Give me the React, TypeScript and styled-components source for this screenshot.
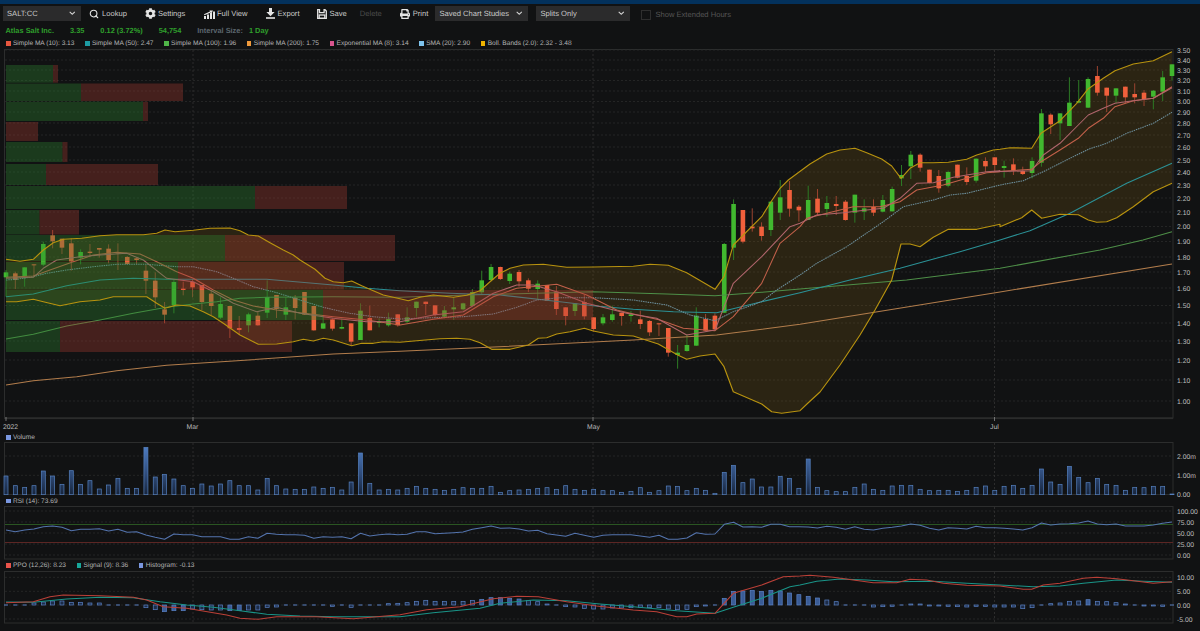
import React from 'react';
import styled, { createGlobalStyle } from 'styled-components';
import { FaChevronDown, FaCog, FaPrint } from 'react-icons/fa';
import { Search } from 'lucide-react';

const GlobalStyle = createGlobalStyle`
  html, body {
    margin: 0;
    height: 100%;
    background: #111213;
    overflow: hidden;
    text-rendering: geometricPrecision;
  }
`;

const Page = styled.div`
  width: 1200px;
  height: 631px;
  display: flex;
  flex-direction: column;
  background: #111213;
  font-family: 'Liberation Sans', Arial, sans-serif;
  color: #c4c4c4;
  overflow: hidden;
`;

const TitleBar = styled.div`
  height: 4px;
  flex: none;
  background: #03315c;
  overflow: hidden;
  padding-left: 14px;
`;

const TitleText = styled.div`
  margin-top: -6px;
  font-size: 8px;
  line-height: 8px;
  font-weight: bold;
  letter-spacing: 0.9px;
  color: #dfe6ee;
`;

const Toolbar = styled.div`
  height: 19px;
  flex: none;
  display: flex;
  align-items: center;
  padding-left: 3px;
  font-size: 7.6px;
`;

const Select = styled.div<{ $w: number; $ml?: number }>`
  width: ${({ $w }) => $w}px;
  height: 15.5px;
  margin-left: ${({ $ml = 0 }) => $ml}px;
  box-sizing: border-box;
  padding: 0 6px 0 4px;
  display: flex;
  align-items: center;
  justify-content: space-between;
  background: #2b2b2c;
  color: #c8c8c8;
  font-size: 7.6px;

  svg {
    width: 6.5px;
    height: 6.5px;
    color: #d8d8d8;
  }
`;

const ToolButton = styled.div<{ $ml: number; $gap?: number; $dim?: boolean }>`
  margin-left: ${({ $ml }) => $ml}px;
  display: flex;
  align-items: center;
  gap: ${({ $gap = 3 }) => $gap}px;
  color: ${({ $dim }) => ($dim ? '#4c4c4c' : '#c8c8c8')};

  svg {
    color: #e4e4e4;
    flex: none;
  }
`;

const CheckBox = styled.div`
  width: 10px;
  height: 10px;
  margin-left: 11px;
  margin-top: 2px;
  border: 1px solid #2e2e2e;
  box-sizing: border-box;
`;

const CheckLabel = styled.span`
  margin-left: 4px;
  margin-top: 1px;
  color: #555;
`;

const InfoRow = styled.div`
  height: 11px;
  flex: none;
  margin-top: 2px;
  display: flex;
  align-items: center;
  padding-left: 5.5px;
  font-size: 7.4px;
  font-weight: bold;
  color: #2f9f2c;
`;

const InfoItem = styled.span<{ $ml?: number; $muted?: boolean }>`
  margin-left: ${({ $ml = 0 }) => $ml}px;
  color: ${({ $muted }) => ($muted ? '#5c666e' : '#2f9f2c')};
`;

const Legend = styled.div<{ $h: number; $top?: number }>`
  height: ${({ $h }) => $h}px;
  flex: none;
  display: flex;
  align-items: center;
  gap: 10.6px;
  padding-left: 6px;
  padding-top: ${({ $top = 0 }) => $top}px;
  box-sizing: border-box;
  font-size: 6.6px;
  color: #b4b4b4;
`;

const LegendItem = styled.span`
  display: flex;
  align-items: center;
  gap: 2.4px;
  white-space: nowrap;
`;

const Swatch = styled.i<{ $c: string }>`
  width: 4.5px;
  height: 4.5px;
  background: ${({ $c }) => $c};
`;

const PaneSvg = styled.svg`
  display: block;
  flex: none;
  width: 1200px;
  overflow: visible;

  text {
    font-family: 'Liberation Sans', Arial, sans-serif;
    font-size: 6.8px;
    fill: #bcbcbc;
  }
`;

const GRID = '#2a2b2b';
const FRAME = '#2c2d2d';

// turns points read off a 3x crop back into page pixels
type P = [number, number];
const crop = (x0: number, y0: number, list: P[]): P[] => list.map(([x, y]) => [x0 + x / 3, y0 + y / 3]);
const poly = (list: P[]) => list.map(([x, y]) => `${x.toFixed(1)},${y.toFixed(1)}`).join(' ');
const cx = (i: number) => 6 + i * 9.328;

type C = [number, number, number, number, 'g' | 'r'];

const candlesA: C[] = [
  [157, 172, 150, 230, 'g'], [160, 180, 155, 207, 'r'], [142, 168, 142, 200, 'g'], [133, 135, 133, 168, 'r'],
  [72, 134, 65, 138, 'g'], [46, 64, 30, 85, 'r'], [56, 83, 56, 102, 'r'], [70, 124, 55, 152, 'r'],
  [96, 113, 88, 133, 'g'], [95, 99, 72, 107, 'r'], [84, 89, 84, 113, 'r'], [86, 120, 73, 130, 'r'],
  [97, 99, 70, 150, 'r'], [111, 132, 108, 133, 'r'], [115, 120, 113, 133, 'r'], [152, 182, 135, 222, 'r'],
  [182, 232, 157, 264, 'r'], [268, 284, 246, 310, 'r'], [186, 256, 178, 280, 'g'], [206, 210, 185, 226, 'r'],
  [186, 202, 178, 232, 'r'], [195, 246, 195, 270, 'r'], [221, 258, 210, 285, 'r'], [252, 293, 232, 297, 'g'],
  [258, 325, 258, 354, 'r'], [324, 330, 288, 345, 'r'], [283, 316, 278, 337, 'g'], [287, 316, 275, 317, 'r'],
  [231, 278, 181, 294, 'g'], [225, 267, 225, 294, 'r'], [262, 284, 232, 300, 'g'], [233, 264, 225, 298, 'r'],
  [216, 284, 216, 285, 'r'], [258, 331, 258, 332, 'r'], [310, 326, 285, 327, 'g'], [298, 326, 295, 332, 'r'],
  [321, 326, 295, 328, 'g'], [310, 365, 310, 378, 'r'], [272, 360, 250, 360, 'g'], [294, 331, 257, 331, 'r'],
  [304, 309, 295, 322, 'g'], [297, 316, 278, 320, 'g'], [283, 316, 283, 320, 'r'],
  [292, 305, 262, 310, 'g'], [245, 264, 245, 290, 'g'], [245, 252, 245, 285, 'r'], [256, 285, 256, 290, 'r'],
  [271, 290, 258, 295, 'g'], [262, 268, 232, 300, 'g'], [250, 268, 248, 272, 'g'], [216, 258, 207, 260, 'g'],
  [181, 217, 152, 222, 'g'], [141, 180, 132, 184, 'g'], [141, 177, 140, 180, 'r'], [161, 183, 155, 192, 'g'],
  [156, 184, 150, 200, 'r'], [181, 206, 175, 216, 'r'], [191, 207, 181, 240, 'g'], [195, 243, 195, 243, 'r'],
  [215, 267, 198, 285, 'r'], [262, 288, 262, 316, 'r'], [250, 273, 250, 288, 'g'], [246, 289, 225, 298, 'r'],
  [292, 327, 292, 335, 'r'], [292, 310, 282, 316, 'g'], [283, 300, 257, 305, 'g'], [278, 288, 278, 317, 'r'],
  [283, 288, 273, 305, 'g'], [298, 312, 272, 327, 'r'], [303, 337, 300, 348, 'r'], [310, 312, 310, 348, 'r'],
  [324, 398, 324, 410, 'r'], [398, 405, 375, 446, 'g'], [375, 393, 342, 395, 'g'], [287, 377, 262, 378, 'g'],
  [297, 332, 282, 334, 'r'], [287, 328, 280, 332, 'r'], [72, 278, 72, 278, 'g'],
];

const candlesB: C[] = [
  [312, 443, 298, 480, 'g'], [330, 425, 330, 430, 'r'], [380, 385, 325, 395, 'r'], [380, 408, 367, 422, 'r'],
  [305, 390, 305, 408, 'g'], [292, 338, 240, 360, 'g'], [270, 326, 243, 350, 'r'], [320, 331, 315, 365, 'r'],
  [300, 360, 257, 360, 'g'], [296, 338, 267, 345, 'r'], [309, 327, 288, 350, 'g'], [312, 318, 288, 345, 'r'],
  [305, 360, 300, 362, 'r'], [284, 338, 284, 368, 'g'], [325, 335, 298, 360, 'g'], [321, 338, 298, 348, 'r'],
  [300, 335, 285, 337, 'g'], [267, 334, 260, 335, 'g'], [225, 235, 195, 258, 'g'], [164, 199, 153, 237, 'g'],
  [164, 203, 160, 215, 'r'], [209, 249, 209, 250, 'r'], [228, 265, 210, 278, 'r'], [216, 257, 212, 262, 'g'],
  [194, 233, 194, 235, 'r'], [228, 246, 202, 255, 'r'], [176, 242, 175, 248, 'g'], [183, 199, 172, 216, 'r'],
];

const candlesC: C[] = [
  [352, 375, 352, 395, 'r'], [378, 384, 362, 413, 'g'], [373, 392, 355, 405, 'r'], [393, 402, 380, 405, 'r'],
  [363, 399, 352, 415, 'g'], [220, 368, 207, 380, 'g'], [224, 253, 220, 282, 'r'], [220, 250, 220, 300, 'g'],
  [188, 258, 112, 258, 'g'], [183, 188, 120, 190, 'g'], [117, 203, 112, 204, 'g'], [108, 158, 78, 167, 'r'],
  [143, 167, 143, 216, 'r'], [145, 167, 145, 190, 'g'], [140, 172, 140, 190, 'r'], [162, 172, 130, 190, 'r'],
  [158, 177, 150, 198, 'r'], [152, 170, 150, 208, 'g'], [112, 155, 93, 183, 'g'], [73, 108, 73, 122, 'g'],
];

const toPage = (list: C[], y0: number): C[] =>
  list.map(([a, b, c, d, k]) => [y0 + a / 3, y0 + b / 3, y0 + c / 3, y0 + d / 3, k]);

const candles: C[] = [...toPage(candlesA, 220), ...toPage(candlesB, 100), ...toPage(candlesC, 40)];
// the tall candle of the May breakout was cut in the first crop
candles[77] = [244, 312.7, 243, 313, 'g'];

const priceLabels: [string, number][] = [
  ['3.50', 50], ['3.40', 60], ['3.30', 70], ['3.20', 80.5], ['3.10', 91], ['3.00', 101.5], ['2.90', 112], ['2.80', 123],
  ['2.70', 135], ['2.60', 147], ['2.50', 160], ['2.40', 172], ['2.30', 185], ['2.20', 198], ['2.10', 212], ['2.00', 226.5],
  ['1.90', 241.5], ['1.80', 257], ['1.70', 272], ['1.60', 288], ['1.50', 305.5], ['1.40', 323], ['1.30', 341], ['1.20', 360],
  ['1.10', 380], ['1.00', 401],
];

// volume profile rows: top, bottom, end of green, end of red
const profile: [number, number, number, number][] = [
  [65, 82.7, 53, 58], [83.5, 101, 81, 183], [101.7, 121, 143, 148], [122, 141, 6, 38], [142, 162, 62.5, 67.5],
  [164, 185, 46, 158], [186, 209, 255, 347], [210, 234.5, 39.5, 79], [235, 261, 225, 395], [262, 289.5, 178, 344],
  [290, 320, 323, 593], [321, 352, 60, 292],
];

const upper: P[] = [
  ...crop(0, 220, [[18, 118], [60, 124], [100, 118], [130, 90], [160, 68], [190, 58], [245, 55], [300, 47], [350, 44], [430, 44], [470, 40], [495, 30], [525, 35], [580, 31], [630, 25], [690, 24], [720, 32], [745, 45], [775, 48], [810, 68], [850, 90], [880, 105], [900, 120], [945, 148], [975, 175], [1000, 185], [1030, 188], [1055, 183], [1085, 197], [1120, 212], [1150, 225]]),
  ...crop(400, 220, [[0, 236], [25, 242], [60, 232], [100, 225], [160, 232], [200, 226], [240, 212], [270, 185], [300, 160], [330, 145], [370, 135], [430, 133], [500, 142], [580, 141], [700, 139], [750, 133], [805, 136], [860, 158], [945, 208]]),
  ...crop(700, 100, [[72, 530], [100, 435], [130, 405], [185, 350], [213, 305], [240, 265], [265, 240], [330, 192], [380, 162], [420, 150], [465, 145], [500, 158], [545, 177], [575, 198], [603, 235], [630, 205], [660, 188], [700, 188], [745, 187], [800, 178], [830, 165], [880, 150], [900, 148]]),
  ...crop(960, 40, [[150, 323], [215, 325], [243, 280], [300, 242], [350, 190], [383, 148], [430, 115], [465, 92], [520, 72], [580, 62], [636, 35]]),
];

const lower: P[] = [
  ...crop(0, 220, [[18, 245], [50, 245], [100, 238], [130, 245], [180, 257], [240, 245], [300, 240], [340, 230], [440, 230], [470, 250], [495, 265], [530, 255], [570, 258], [610, 275], [640, 290], [670, 310], [720, 345], [775, 373], [830, 372], [880, 365], [910, 358], [940, 363], [970, 355], [1000, 360], [1055, 377], [1085, 370], [1120, 370], [1150, 365]]),
  ...crop(400, 220, [[0, 367], [50, 362], [120, 356], [170, 355], [210, 358], [240, 368], [275, 388], [330, 388], [385, 375], [415, 355], [440, 353], [470, 342], [510, 335], [553, 325], [580, 333], [640, 345], [700, 348], [775, 372], [833, 405], [860, 418], [900, 408], [945, 402], [972, 440], [1000, 515], [1085, 552], [1115, 575], [1145, 580], [1200, 572]]),
  [808, 403], [820, 392], [840, 365], [860, 335], [875, 310],
  ...crop(700, 100, [[575, 540], [603, 432], [630, 432], [660, 440], [700, 412], [745, 388], [830, 388], [900, 373]]),
  ...crop(960, 40, [[120, 560], [185, 533], [215, 510], [245, 535], [300, 523], [355, 524], [385, 540], [410, 547], [440, 545], [470, 533], [520, 500], [580, 455], [636, 430]]),
];

const sma20: P[] = [
  ...crop(0, 220, [[18, 180], [50, 178], [100, 170], [140, 160], [200, 150], [280, 140], [350, 133], [440, 133], [530, 140], [580, 140], [650, 155], [700, 175], [760, 200], [830, 218], [900, 240], [970, 262], [1050, 280], [1120, 290]]),
  ...crop(400, 220, [[0, 297], [70, 294], [190, 290], [280, 282], [350, 262], [410, 240], [480, 233], [580, 233], [700, 240], [800, 255], [870, 285], [945, 302], [1000, 275], [1085, 245], [1130, 210], [1200, 165]]),
  ...crop(700, 100, [[350, 490], [440, 440], [550, 365], [610, 320], [700, 300], [750, 285], [800, 280], [900, 255]]),
  ...crop(960, 40, [[190, 422], [250, 395], [330, 355], [385, 328], [440, 310], [500, 280], [580, 250], [636, 217]]),
];

const sma50: P[] = [
  ...crop(0, 220, [[18, 230], [100, 222], [200, 197], [300, 180], [400, 175], [500, 178], [800, 178], [1000, 195], [1100, 205]]),
  ...crop(400, 220, [[0, 212], [150, 220], [300, 225], [480, 245], [580, 257], [700, 268], [820, 275], [950, 278], [1085, 245], [1200, 218]]),
  ...crop(700, 100, [[450, 540], [600, 505], [780, 455], [900, 420]]),
  ...crop(960, 40, [[210, 572], [330, 520], [500, 430], [636, 370]]),
];

const sma100: P[] = [
  ...crop(0, 220, [[18, 357], [100, 343], [200, 318], [300, 300], [400, 280], [500, 262], [580, 252], [650, 245], [720, 235], [800, 232], [1000, 230]]),
  ...crop(400, 220, [[0, 232], [200, 225], [580, 215], [800, 222], [945, 227], [1085, 217], [1200, 207]]),
  ...crop(700, 100, [[620, 540], [900, 505]]),
  [1100, 250], [1143, 240], [1172, 231.7],
];

const sma200: P[] = [
  ...crop(0, 220, [[18, 495], [100, 482], [230, 470], [350, 452], [500, 436], [700, 423], [1000, 402]]),
  ...crop(400, 220, [[0, 394], [200, 385], [400, 375], [700, 360], [950, 345], [1200, 313]]),
  [1000, 292], [1172, 264],
];

const sma10: P[] = [
  ...crop(0, 220, [[18, 172], [100, 168], [150, 150], [220, 125], [280, 105], [350, 97], [420, 102], [470, 125], [530, 155], [580, 175], [640, 210], [700, 240], [760, 258], [830, 270], [900, 278], [1000, 290], [1100, 300]]),
  ...crop(400, 220, [[0, 315], [100, 298], [190, 285], [280, 230], [350, 205], [470, 193], [560, 225], [650, 270], [700, 282], [780, 300], [850, 325], [945, 332], [1000, 290], [1085, 190]]),
  ...crop(700, 100, [[240, 430], [300, 380], [320, 355], [380, 340], [460, 320], [540, 320], [600, 305], [650, 270], [730, 255], [800, 235], [860, 218], [900, 215]]),
  ...crop(960, 40, [[100, 395], [215, 388], [243, 365], [300, 330], [355, 295], [385, 265], [430, 235], [465, 200], [520, 182], [580, 175], [636, 140]]),
];

const ema8: P[] = [
  ...crop(0, 220, [[18, 175], [100, 172], [130, 145], [170, 120], [240, 110], [300, 105], [380, 100], [430, 120], [500, 175], [580, 185], [640, 215], [700, 250], [770, 275], [830, 262], [900, 280], [1000, 295], [1100, 305]]),
  ...crop(400, 220, [[0, 305], [100, 285], [190, 275], [280, 220], [350, 195], [400, 195], [470, 215], [560, 250], [680, 280], [770, 295], [860, 345], [945, 330], [1000, 190], [1085, 110], [1170, 20]]),
  ...crop(700, 100, [[300, 370], [350, 345], [430, 338], [500, 330], [550, 325], [600, 295], [650, 250], [700, 248], [760, 232], [860, 215], [900, 212]]),
  ...crop(960, 40, [[100, 395], [215, 392], [250, 345], [300, 310], [355, 255], [385, 225], [430, 205], [465, 190], [520, 182], [580, 175], [636, 143]]),
];

// tops of the volume bars in the 3x crop, base line is at 224
const volumes = [
  168, 197, 202, 197, 153, 168, 193, 152, 193, 182, 207, 195, 175, 205, 205, 82, 171, 163, 177, 197, 205, 192, 198, 192, 182, 197, 197, 210, 175, 197, 207, 208, 208, 201, 205, 202, 210, 186, 99, 190, 210, 208, 210,
  205, 199, 205, 208, 211, 208, 203, 205, 205, 199, 217, 212, 210, 208, 205, 203, 208, 197, 208, 211, 208, 212, 212, 217, 214, 203, 217, 212, 198, 199, 212, 205, 211, 220, 157, 136, 188, 177, 201, 201, 169, 175, 205,
  117, 202, 212, 215, 215, 202, 192, 208, 211, 198, 196, 196, 208, 212, 211, 211, 214, 211, 202, 198, 211, 199, 196, 205, 196, 147, 186, 193, 139, 172, 188, 175, 193, 196, 211, 202, 203, 199, 199, 222,
];

const rsi = [
  330, 335, 330, 327, 320, 318, 322, 332, 328, 328, 326, 333, 328, 337, 335, 345, 352, 358, 342, 344, 344, 350, 350, 350, 358, 358, 350, 355, 340, 343, 344, 344, 346, 355, 350, 352, 350, 356, 340, 348, 344, 342, 344,
  343, 335, 335, 341, 340, 338, 336, 328, 323, 318, 325, 324, 327, 333, 331, 341, 345, 349, 340, 346, 352, 346, 344, 344, 344, 348, 352, 346, 358, 358, 354, 338, 343, 342, 313, 307, 321, 320, 322, 313, 313, 320, 320,
  321, 324, 319, 322, 328, 320, 328, 330, 325, 322, 318, 312, 316, 325, 330, 323, 325, 327, 319, 323, 323, 325, 327, 330, 323, 309, 315, 312, 311, 309, 303, 312, 314, 312, 318, 318, 318, 315, 310, 306,
];

// histogram values in crop pixels, up from the zero line
const histogram = [
  -1, 0, 0, 6, 9, 12, 12, 8, 8, 6, 6, 2, 2, 0, 0, -8, -14, -20, -17, -17, -12, -14, -15, -15, -17, -17, -15, -15, -7, -6, -2, -1, 0, -2, -2, -4, -2, -7, -1, -1, 2, 4, 5,
  7, 11, 14, 11, 11, 11, 11, 14, 17, 22, 22, 20, 18, 14, 10, 3, 1, -5, -6, -10, -12, -12, -9, -9, -8, -7, -8, -8, -12, -14, -13, -5, -3, -1, 20, 41, 42, 44, 41, 44, 42, 36, 31,
  26, 21, 15, 10, 1, 1, 0, -6, -5, -4, -1, 3, 3, -3, -3, -4, -5, -6, -4, -4, -6, -6, -6, -11, -8, 1, 4, 6, 11, 12, 16, 11, 10, 7, 3, 0, -3, -3, -4, -1,
];

const ppo: P[] = [
  ...crop(0, 420, [[18, 548], [100, 545], [150, 530], [190, 525], [300, 527], [400, 532], [440, 540], [490, 560], [560, 565], [640, 578], [680, 585], [720, 595], [775, 598], [830, 590], [950, 590], [1060, 596]]),
  ...crop(400, 420, [[0, 584], [80, 569], [180, 560], [280, 536], [350, 529], [415, 530], [500, 545], [590, 558], [700, 570], [770, 575], [830, 590], [860, 590], [890, 582], [945, 580], [1000, 520], [1085, 495], [1150, 470]]),
  ...crop(800, 420, [[0, 468], [30, 466], [100, 472], [160, 480], [220, 488], [290, 488], [330, 478], [380, 480], [430, 490], [500, 496], [600, 498], [670, 508], [695, 508], [730, 495], [780, 490], [850, 475], [890, 472], [950, 476], [1000, 482], [1060, 490], [1116, 485]]),
];

const signal: P[] = [
  ...crop(0, 420, [[18, 546], [100, 547], [200, 537], [300, 532], [400, 533], [480, 545], [560, 555], [640, 562], [720, 572], [800, 583], [900, 588], [1000, 590]]),
  ...crop(400, 420, [[0, 590], [100, 578], [240, 565], [300, 550], [400, 540], [500, 542], [600, 552], [700, 560], [830, 572], [945, 580], [1000, 562], [1085, 535], [1170, 500]]),
  ...crop(800, 420, [[0, 495], [50, 484], [120, 477], [200, 480], [280, 485], [400, 484], [500, 490], [600, 495], [700, 500], [780, 498], [850, 490], [950, 480], [1030, 484], [1116, 487]]),
];

const HLine = ({ y, x2 = 1173 }: { y: number; x2?: number }) => (
  <line x1={5} x2={x2} y1={y} y2={y} stroke={GRID} strokeWidth={0.8} strokeDasharray="2 2" />
);

const MonthLines = ({ top, bottom }: { top: number; bottom: number }) => (
  <>
    {[193, 593, 994.5].map((x) => (
      <line key={x} x1={x} x2={x} y1={top} y2={bottom} stroke="#333434" strokeWidth={0.8} strokeDasharray="2 2" />
    ))}
  </>
);

const Line = ({ points, color, width = 1.05, dash }: { points: P[]; color: string; width?: number; dash?: string }) => (
  <polyline points={poly(points)} fill="none" stroke={color} strokeWidth={width} strokeDasharray={dash} strokeLinejoin="round" />
);

const PricePane = () => (
  <PaneSvg viewBox="0 48 1200 384" height={384}>
    <rect x={4.5} y={49.5} width={1168.5} height={368.5} fill="none" stroke={FRAME} />
    {priceLabels.map(([, y]) => (
      <HLine key={y} y={y} />
    ))}
    <MonthLines top={50} bottom={418} />
    <polygon points={poly([...upper, ...[...lower].reverse()])} fill="rgba(125,93,21,.25)" />
    {candles.map(([a, b, c, d, k], i) => (
      <g key={i}>
        <line x1={cx(i)} x2={cx(i)} y1={c} y2={d} stroke={k === 'g' ? '#2d7a25' : '#9c4430'} strokeWidth={1} />
        <rect x={cx(i) - 2.3} y={a} width={4.6} height={Math.max(b - a, 1)} fill={k === 'g' ? '#41b82f' : '#f1603c'} />
      </g>
    ))}
    <Line points={sma200} color="#b27d4c" />
    <Line points={sma100} color="#4e8f48" />
    <Line points={sma50} color="#2b9196" />
    <Line points={sma20} color="#6d8f9c" dash="1.5 0.8" />
    <Line points={sma10} color="#c2604a" />
    <Line points={ema8} color="#b0656c" />
    {profile.map(([top, bottom, green, red]) => (
      <g key={top}>
        <rect x={6} y={top} width={green - 6} height={bottom - top} fill="rgba(46,134,48,.35)" />
        <rect x={green} y={top} width={Math.max(red - green, 0)} height={bottom - top} fill="rgba(165,60,48,.35)" />
      </g>
    ))}
    <Line points={upper} color="#b8930f" width={1.15} />
    <Line points={lower} color="#b8930f" width={1.15} />
    <rect x={4} y={417.5} width={1169} height={1.6} fill="#2b2c2c" />
    {priceLabels.map(([label, y]) => (
      <text key={label} x={1177} y={y + 2.5}>
        {label}
      </text>
    ))}
    {[6, 193, 593, 994.5].map((x) => (
      <line key={x} x1={x} x2={x} y1={417} y2={421} stroke="#8a8a8a" strokeWidth={0.8} />
    ))}
    <text x={3} y={429}>2022</text>
    <text x={186.5} y={429}>Mar</text>
    <text x={587} y={429}>May</text>
    <text x={990} y={429}>Jul</text>
  </PaneSvg>
);

const VolumePane = () => (
  <PaneSvg viewBox="0 442 1200 54" height={54}>
    <defs>
      <linearGradient id="volFill" gradientUnits="userSpaceOnUse" x1="0" y1="445" x2="0" y2="495">
        <stop offset="0" stopColor="#4f7fc6" />
        <stop offset="0.6" stopColor="#2e4a78" />
        <stop offset="1" stopColor="#17243a" />
      </linearGradient>
    </defs>
    <rect x={4.5} y={442.5} width={1168.5} height={52} fill="none" stroke={FRAME} />
    <HLine y={456} />
    <HLine y={475.3} />
    <MonthLines top={443} bottom={494} />
    {volumes.map((v, i) => (
      <rect
        key={i}
        x={cx(i) - 2}
        y={420 + v / 3}
        width={4}
        height={(224 - v) / 3}
        fill="url(#volFill)"
        stroke="#5580bf"
        strokeWidth={0.7}
      />
    ))}
    <text x={1177} y={458.5}>2.00m</text>
    <text x={1177} y={477.8}>1.00m</text>
    <text x={1177} y={497}>0.00</text>
  </PaneSvg>
);

const RsiPane = () => (
  <PaneSvg viewBox="0 506 1200 54" height={54}>
    <rect x={4.5} y={506.5} width={1168.5} height={52.5} fill="none" stroke={FRAME} />
    {[511, 522, 533, 544, 555].map((y) => (
      <HLine key={y} y={y} />
    ))}
    <MonthLines top={507} bottom={558} />
    <line x1={5} x2={1173} y1={524.5} y2={524.5} stroke="#2a5522" />
    <line x1={5} x2={1173} y1={542.5} y2={542.5} stroke="#5c2624" />
    <Line points={rsi.map((v, i) => [cx(i), 420 + v / 3] as P)} color="#5474ae" />
    {[['100.00', 511], ['75.00', 522], ['50.00', 533], ['25.00', 544], ['0.00', 555]].map(([label, y]) => (
      <text key={label} x={1177} y={Number(y) + 2.5}>
        {label}
      </text>
    ))}
  </PaneSvg>
);

const PpoPane = () => (
  <PaneSvg viewBox="0 571 1200 54" height={54}>
    <rect x={4.5} y={571.5} width={1168.5} height={51.5} fill="none" stroke={FRAME} />
    {[577.3, 591.3, 605, 619].map((y) => (
      <HLine key={y} y={y} />
    ))}
    <MonthLines top={572} bottom={622} />
    {histogram.map((h, i) => {
      const zero = 605;
      const size = Math.abs(h) / 3;
      if (size < 1) {
        return <rect key={i} x={cx(i) - 2} y={zero - 0.5} width={4} height={1} fill="#5a82c6" />;
      }
      return (
        <rect
          key={i}
          x={cx(i) - 2}
          y={h > 0 ? zero - size : zero}
          width={4}
          height={size}
          fill={size > 5 ? '#3a5c96' : '#1c2c48'}
          stroke="#5a82c6"
          strokeWidth={0.7}
        />
      );
    })}
    <Line points={signal} color="#1a9488" />
    <Line points={ppo} color="#bb4038" />
    {[['10.00', 577.3], ['5.00', 591.3], ['0.00', 605], ['-5.00', 619]].map(([label, y]) => (
      <text key={label} x={1177} y={Number(y) + 2.5}>
        {label}
      </text>
    ))}
  </PaneSvg>
);

const FullViewIcon = () => (
  <svg width={11} height={10} viewBox="0 0 11 10" fill="currentColor">
    <rect x={0} y={7} width={2} height={3} />
    <rect x={3} y={5.5} width={2} height={4.5} />
    <rect x={6} y={4} width={2} height={6} />
    <rect x={9} y={2.5} width={2} height={7.5} />
    <path d="M0 5.2 6 2.6 5.5 1.4 9 1.6 7.4 4.4 6.9 3.4 .4 6.2Z" />
  </svg>
);

const ExportIcon = () => (
  <svg width={9} height={11} viewBox="0 0 9 11" fill="currentColor">
    <path d="M3 0h3v4h2.6L4.5 8.2.4 4H3Z" />
    <rect x={0} y={9.2} width={9} height={1.6} />
  </svg>
);

const SaveIcon = () => (
  <svg width={10} height={10} viewBox="0 0 10 10" fill="none" stroke="currentColor" strokeWidth={1.3}>
    <path d="M.7.7h1.8v3h4.6v-3h.9l1.3 1.3v7.3H.7Z" />
    <rect x={2.2} y={6} width={5.6} height={3.3} />
  </svg>
);

const legendMain = [
  ['#e8573f', 'Simple MA (10): 3.13'],
  ['#1d9ba3', 'Simple MA (50): 2.47'],
  ['#4fb548', 'Simple MA (100): 1.96'],
  ['#f09a3c', 'Simple MA (200): 1.75'],
  ['#d9558f', 'Exponential MA (8): 3.14'],
  ['#7fc4ee', 'SMA (20): 2.90'],
  ['#f0b400', 'Boll. Bands (2.0): 2.32 - 3.48'],
];

const legendPpo = [
  ['#e8534a', 'PPO (12,26): 8.23'],
  ['#17a79a', 'Signal (9): 8.36'],
  ['#7a97e0', 'Histogram: -0.13'],
];

const LegendRow = ({ items, h, top }: { items: string[][]; h: number; top?: number }) => (
  <Legend $h={h} $top={top}>
    {items.map(([color, text]) => (
      <LegendItem key={text}>
        <Swatch $c={color} />
        {text}
      </LegendItem>
    ))}
  </Legend>
);

export default function App() {
  return (
    <Page>
      <GlobalStyle />
      <TitleBar>
        <TitleText>CHARTS AND PRICES</TitleText>
      </TitleBar>
      <Toolbar>
        <Select $w={78}>
          SALT:CC
          <FaChevronDown />
        </Select>
        <ToolButton $ml={8}>
          <Search size={10} strokeWidth={2.6} />
          Lookup
        </ToolButton>
        <ToolButton $ml={18} $gap={2}>
          <FaCog size={11} />
          Settings
        </ToolButton>
        <ToolButton $ml={18.5} $gap={2}>
          <FullViewIcon />
          Full View
        </ToolButton>
        <ToolButton $ml={18} $gap={3}>
          <ExportIcon />
          Export
        </ToolButton>
        <ToolButton $ml={17}>
          <SaveIcon />
          Save
        </ToolButton>
        <ToolButton $ml={13} $dim>
          Delete
        </ToolButton>
        <ToolButton $ml={18}>
          <FaPrint size={10} />
          Print
        </ToolButton>
        <Select $w={93} $ml={7}>
          Saved Chart Studies
          <FaChevronDown />
        </Select>
        <Select $w={94} $ml={8}>
          Splits Only
          <FaChevronDown />
        </Select>
        <CheckBox />
        <CheckLabel>Show Extended Hours</CheckLabel>
      </Toolbar>
      <InfoRow>
        <InfoItem>Atlas Salt Inc.</InfoItem>
        <InfoItem $ml={16}>3.35</InfoItem>
        <InfoItem $ml={16}>0.12 (3.72%)</InfoItem>
        <InfoItem $ml={16}>54,754</InfoItem>
        <InfoItem $ml={16} $muted>
          Interval Size:
        </InfoItem>
        <InfoItem $ml={6}>1 Day</InfoItem>
      </InfoRow>
      <LegendRow items={legendMain} h={12} top={3} />
      <PricePane />
      <LegendRow items={[['#7a97e0', 'Volume']]} h={10} top={1} />
      <VolumePane />
      <LegendRow items={[['#7a97e0', 'RSI (14): 73.69']]} h={10} />
      <RsiPane />
      <LegendRow items={legendPpo} h={11} />
      <PpoPane />
    </Page>
  );
}
